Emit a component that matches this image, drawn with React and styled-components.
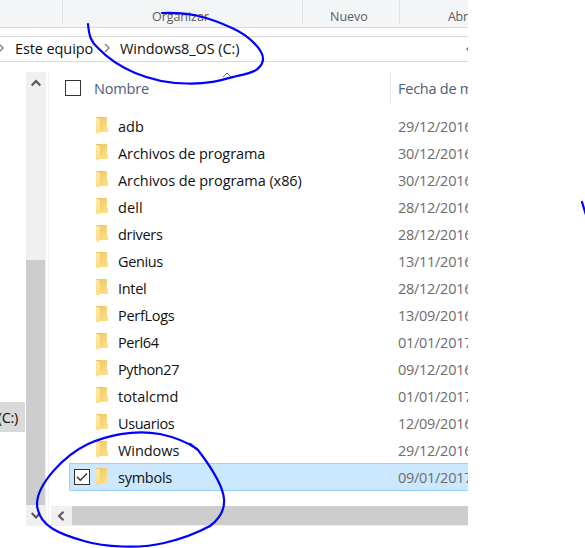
import React from "react";
import styled, { createGlobalStyle } from "styled-components";

const GlobalStyle = createGlobalStyle`
  * { box-sizing: border-box; }
  body { margin: 0; background: #fff; font-family: "Open Sans", "Noto Sans", sans-serif; }
`;

const Page = styled.main`
  position: relative;
  width: 585px;
  height: 548px;
  overflow: hidden;
  background: #fff;
`;

const ExplorerWindow = styled.section`
  display: flex;
  flex-direction: column;
  width: 468px;
  height: 526px;
  overflow: hidden;
`;

const Ribbon = styled.header`
  display: flex;
  flex: none;
  height: 28px;
  background: #f4f5f7;
  border-bottom: 1px solid #d9dadb;
`;

const RibbonGroup = styled.div`
  flex: none;
  width: ${(p) => p.$width}px;
  height: 24px;
  padding: 8px 0 0 ${(p) => p.$indent || 0}px;
  border-right: 1px solid #dfe1e4;
  color: #5c5c5c;
  font-size: ${(p) => p.$size || 12}px;
  line-height: 17px;
  letter-spacing: ${(p) => p.$tracking || 0}px;
  white-space: nowrap;
`;

const AddressBar = styled.nav`
  display: flex;
  flex: none;
  align-items: center;
  height: 26px;
  margin-top: 8px;
  border: solid #d9d9d9;
  border-width: 1px 0;
  color: #111;
  font-size: 14.5px;
  line-height: 20px;
  white-space: nowrap;
`;

const Crumb = styled.span`
  flex: none;
  width: ${(p) => p.$width}px;
  margin-top: -1px;
  letter-spacing: ${(p) => p.$tracking}px;
`;

const CrumbArrow = styled.svg`
  flex: none;
  width: 6px;
  height: 10px;
  margin-right: ${(p) => p.$gap}px;
  margin-left: ${(p) => p.$start || 0}px;
  margin-top: -2px;
  overflow: visible;
`;

const HistoryArrow = styled.svg`
  flex: none;
  width: 8px;
  height: 6px;
  margin-left: auto;
  margin-right: -6px;
`;

const Body = styled.div`
  display: flex;
  flex: 1;
  min-height: 0;
  margin-top: 10px;
`;

const NavPane = styled.aside`
  flex: none;
  width: 26px;
  padding-top: 330px;
`;

const DriveItem = styled.div`
  display: flex;
  justify-content: flex-end;
  align-items: center;
  width: 25px;
  height: 30px;
  padding-right: 7px;
  overflow: hidden;
  background: #d9d9d9;
  color: #111;
  font-size: 14.5px;
  letter-spacing: -0.3px;
  white-space: nowrap;
`;

const VerticalScrollbar = styled.div`
  display: flex;
  flex: none;
  flex-direction: column;
  width: 20px;
  background: #f0f0f0;
`;

const ScrollButton = styled.div`
  display: flex;
  flex: none;
  align-items: center;
  justify-content: center;
  width: ${(p) => p.$width}px;
  height: ${(p) => p.$height}px;
  background: #f0f0f0;
`;

const VerticalThumb = styled.div`
  width: 19px;
  height: 245px;
  margin-top: auto;
  background: #cdcdcd;
`;

const FilePane = styled.div`
  display: flex;
  flex: 1;
  flex-direction: column;
  min-width: 0;
  margin-left: 2px;
  border-left: 1px solid #f2f2f2;
`;

const ColumnHeader = styled.div`
  display: flex;
  flex: none;
  height: 32px;
  color: #4c607a;
  font-size: 14.5px;
  line-height: 33px;
  white-space: nowrap;
`;

const NameHeading = styled.div`
  position: relative;
  display: flex;
  flex: none;
  align-items: center;
  gap: 13px;
  width: 342px;
  padding-left: 16px;
  border-right: 1px solid #e2e2e2;
  letter-spacing: -0.15px;
`;

const SortMark = styled.svg`
  position: absolute;
  left: 173px;
  top: 0;
  width: 10px;
  height: 6px;
`;

const DateHeading = styled.div`
  padding-left: 7px;
  letter-spacing: -0.25px;
`;

const FileList = styled.div`
  flex: 1;
  padding: 9px 0 0 20px;
`;

const FileRow = styled.div`
  display: flex;
  align-items: center;
  height: ${(p) => (p.$selected ? 28 : 27)}px;
  margin-top: ${(p) => (p.$selected ? -1 : 0)}px;
  padding-left: ${(p) => (p.$selected ? 4 : 5)}px;
  background: ${(p) => (p.$selected ? "#cce8ff" : "transparent")};
  border: ${(p) => (p.$selected ? "1px solid #99d1ff" : "0")};
  border-right: 0;
  font-size: 14.5px;
  line-height: ${(p) => (p.$selected ? 22 : 20)}px;
  white-space: nowrap;
`;

const CheckSlot = styled.div`
  flex: none;
  width: 22px;
  height: 16px;
`;

const CheckBox = styled.div`
  flex: none;
  width: 16px;
  height: 16px;
  background: #fff;
  border: 1px solid #333;

  svg { display: block; width: 14px; height: 14px; }
`;

const FolderIcon = styled.svg`
  flex: none;
  width: 12px;
  height: 18px;
  margin-top: -1px;
`;

const FileName = styled.span`
  flex: none;
  width: 290px;
  padding-top: ${(p) => (p.$selected ? 1 : 0)}px;
  padding-left: 10px;
  color: #111;
  letter-spacing: ${(p) => p.$tracking}px;
`;

const FileDate = styled.span`
  padding-top: ${(p) => (p.$selected ? 1 : 0)}px;
  color: #6d6d6d;
  letter-spacing: -0.28px;
`;

const HorizontalScrollbar = styled.div`
  display: flex;
  height: 20px;
  margin-left: 2px;
  background: #f0f0f0;
`;

const HorizontalThumb = styled.div`
  flex: 1;
  height: 19px;
  background: #cdcdcd;
`;

const InkLayer = styled.svg`
  position: absolute;
  inset: 0;
  width: 585px;
  height: 548px;
  pointer-events: none;
`;

const FILES = [
  ["adb", "29/12/2016", 0],
  ["Archivos de programa", "30/12/2016", -0.08],
  ["Archivos de programa (x86)", "30/12/2016", -0.06],
  ["dell", "28/12/2016", 0.1],
  ["drivers", "28/12/2016", -0.3],
  ["Genius", "13/11/2016", -0.4],
  ["Intel", "28/12/2016", -0.3],
  ["PerfLogs", "13/09/2016", -0.28],
  ["Perl64", "01/01/2017", -0.4],
  ["Python27", "09/12/2016", -0.4],
  ["totalcmd", "01/01/2017", 0.05],
  ["Usuarios", "12/09/2016", -0.42],
  ["Windows", "29/12/2016", -0.05],
  ["symbols", "09/01/2017", -0.25],
];

function Chevron({ d }) {
  return (
    <svg width="10" height="10" viewBox="0 0 10 10" fill="none">
      <path d={d} stroke="#555" strokeWidth="2" />
    </svg>
  );
}

function Folder() {
  return (
    <FolderIcon viewBox="0 0 12 18">
      <defs>
        <linearGradient id="folderBack" x1="0" y1="0" x2="1" y2="1">
          <stop offset="0" stopColor="#e9c360" />
          <stop offset="1" stopColor="#ffe38a" />
        </linearGradient>
        <linearGradient id="folderFront" x1="0" y1="0" x2="0" y2="1">
          <stop offset="0" stopColor="#ffe9a6" />
          <stop offset="1" stopColor="#f9dc83" />
        </linearGradient>
      </defs>
      <path d="M0 0h11v10h1v5H2L0 14z" fill="url(#folderBack)" />
      <path d="M0 0.5L4 2v13H3v2L0 15.5z" fill="url(#folderFront)" />
    </FolderIcon>
  );
}

export default function App() {
  return (
    <Page>
      <GlobalStyle />
      <ExplorerWindow>
        <Ribbon>
          <RibbonGroup $width={63} />
          <RibbonGroup $width={240} $indent={89} $size={12.5} $tracking={-0.05}>Organizar</RibbonGroup>
          <RibbonGroup $width={97} $indent={27} $size={12.5}>Nuevo</RibbonGroup>
          <RibbonGroup $width={69} $indent={48} $size={12.5} $tracking={-0.3}>Abr</RibbonGroup>
        </Ribbon>
        <AddressBar>
          <CrumbArrow $gap={11} $start={-2} viewBox="0 0 6 10">
            <path d="M1 1l4 4-4 4" fill="none" stroke="#888" strokeWidth="1.5" />
          </CrumbArrow>
          <Crumb $width={89} $tracking={-0.1}>Este equipo</Crumb>
          <CrumbArrow $gap={10} viewBox="0 0 6 10">
            <path d="M1 1l4 4-4 4" fill="none" stroke="#888" strokeWidth="1.5" />
          </CrumbArrow>
          <Crumb $width={125} $tracking={-0.08}>Windows8_OS (C:)</Crumb>
          <HistoryArrow viewBox="0 0 8 6">
            <path d="M0 3L2 1v4z" fill="#777" />
          </HistoryArrow>
        </AddressBar>
        <Body>
          <NavPane>
            <DriveItem>(C:)</DriveItem>
          </NavPane>
          <VerticalScrollbar>
            <ScrollButton $width={19} $height={21}>
              <Chevron d="M0.7 7.5L5 3l4.3 4.5" />
            </ScrollButton>
            <VerticalThumb />
            <ScrollButton $width={19} $height={21}>
              <Chevron d="M0.7 2L5 6.5l4.3-4.5" />
            </ScrollButton>
          </VerticalScrollbar>
          <FilePane>
            <ColumnHeader>
              <NameHeading>
                <CheckBox />
                Nombre
                <SortMark viewBox="0 0 10 6">
                  <path d="M1 5l4-4 4 4" fill="none" stroke="#666" />
                </SortMark>
              </NameHeading>
              <DateHeading>Fecha de modificación</DateHeading>
            </ColumnHeader>
            <FileList>
              {FILES.map(([name, date, tracking]) => {
                const selected = name === "symbols";
                return (
                  <FileRow key={name} $selected={selected}>
                    <CheckSlot>
                      {selected && (
                        <CheckBox>
                          <svg viewBox="0 0 14 14">
                            <path d="M2 6.8l3.3 3.4L12 3.5" fill="none" stroke="#333" strokeWidth="1.4" />
                          </svg>
                        </CheckBox>
                      )}
                    </CheckSlot>
                    <Folder />
                    <FileName $selected={selected} $tracking={tracking}>{name}</FileName>
                    <FileDate $selected={selected}>{date}</FileDate>
                  </FileRow>
                );
              })}
            </FileList>
            <HorizontalScrollbar>
              <ScrollButton $width={21} $height={19}>
                <Chevron d="M6.5 0.7L2 5l4.5 4.3" />
              </ScrollButton>
              <HorizontalThumb />
            </HorizontalScrollbar>
          </FilePane>
        </Body>
      </ExplorerWindow>
      <InkLayer viewBox="0 0 585 548" fill="none" stroke="#0000ff" strokeWidth="2.2" strokeLinecap="round">
        <path d="M88 24C89 36 91 42 98 48C116 67 148 83 187 83.5C210 84 222 80 237 76C250 73 261 71 263 60C264 51 250 36 232 28C208 17 190 12 162 13" />
        <path d="M197 449C187 442 174 437 160 434C133 429 106 436 88 444C63 456 38 484 37 503C37 527 63 535 84 541C104 547 140 549 164 543C181 539 199 532 210 526C218 520 225 512 224 499C223 486 211 467 198 450L190 444" />
        <path d="M582 202l4 13" />
      </InkLayer>
    </Page>
  );
}
